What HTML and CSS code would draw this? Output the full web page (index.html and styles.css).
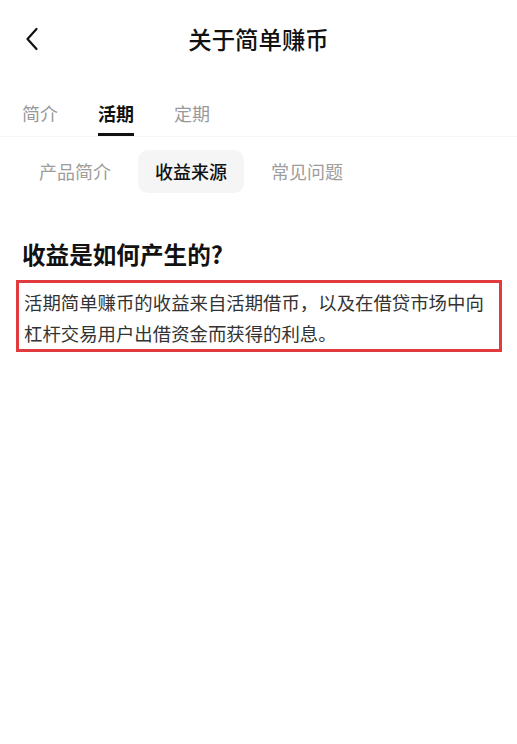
FILE: index.html
```html
<!DOCTYPE html>
<html lang="zh-CN">
<head>
<meta charset="utf-8">
<title>关于简单赚币</title>
<link rel="stylesheet" href="styles.css">
</head>
<body>
<div class="page">
  <header class="header">
    <div class="back">
      <svg width="14" height="24" viewBox="0 0 14 24" aria-hidden="true">
        <path d="M11.5 2 L2.5 12 L11.5 22" fill="none" stroke="#111" stroke-width="2.2" stroke-linecap="round" stroke-linejoin="round"/>
      </svg>
    </div>
    <h1 class="title">关于简单赚币</h1>
    <div></div>
  </header>

  <nav class="tabs">
    <span class="tab">简介</span>
    <span class="tab active">活期</span>
    <span class="tab">定期</span>
  </nav>

  <div class="subtabs">
    <span class="pill">产品简介</span>
    <span class="pill active">收益来源</span>
    <span class="pill">常见问题</span>
  </div>

  <h2 class="heading">收益是如何产生的?</h2>
  <div class="box">
    <p class="text">活期简单赚币的收益来自活期借币，以及在借贷市场中向杠杆交易用户出借资金而获得的利息。</p>
  </div>
</div>
</body>
</html>
```

FILE: styles.css
```css
* { box-sizing: border-box; }
html, body {
  margin: 0;
  padding: 0;
  background: #fff;
}
body {
  font-family: "Noto Sans CJK SC", "Noto Sans", sans-serif;
  color: #111;
}
.page {
  width: 517px;
  min-height: 744px;
}
.header {
  height: 78px;
  display: grid;
  grid-template-columns: 1fr auto 1fr;
  align-items: center;
}
.back {
  padding-left: 25px;
  display: flex;
  align-items: center;
}
.back svg { display: block; }
.title {
  margin: 0;
  font-size: 23.4px;
  font-weight: 500;
  line-height: 32px;
  color: #111;
}
.tabs {
  display: flex;
  gap: 40px;
  padding: 22px 22px 0;
  border-bottom: 1px solid #f7f7f7;
}
.tab {
  font-size: 18px;
  line-height: 26px;
  color: #999;
  padding-bottom: 7px;
  border-bottom: 3px solid transparent;
}
.tab.active {
  color: #111;
  font-weight: 700;
  border-bottom-color: #111;
}
.subtabs {
  display: flex;
  gap: 10px;
  padding: 0 22px;
  margin-top: 13px;
}
.pill {
  height: 43px;
  line-height: 43px;
  padding: 0 17px;
  border-radius: 10px;
  font-size: 18px;
  color: #9d9d9d;
}
.pill.active {
  background: #f5f5f5;
  color: #111;
  font-weight: 500;
}
.heading {
  margin: 45px 0 0 22px;
  font-size: 23.6px;
  font-weight: 700;
  line-height: 32px;
  color: #111;
}
.box {
  margin: 10px 15px 0 16px;
  border: 3px solid #e23b3f;
  padding: 4px 3px 0 5px;
}
.text {
  margin: 0;
  font-size: 18.4px;
  line-height: 31px;
  color: #333;
}
```
